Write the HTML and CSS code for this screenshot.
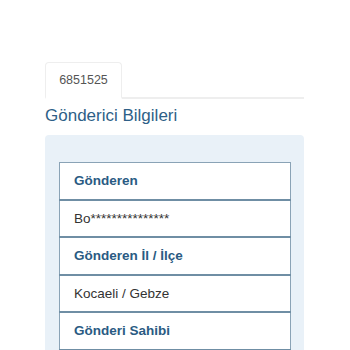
FILE: index.html
```html
<!DOCTYPE html>
<html>

<head>
	<link rel="stylesheet" href="styles.css">
</head>

<body>
	<div class="page">
		<div class="tabs">
			<div class="tab">6851525</div>
		</div>

		<h2 class="section-title">Gönderici Bilgileri</h2>

		<div class="panel">
			<table class="info-table">
				<tr><td class="label">Gönderen</td></tr>
				<tr><td>Bo***************</td></tr>
				<tr><td class="label">Gönderen İl / İlçe</td></tr>
				<tr><td>Kocaeli / Gebze</td></tr>
				<tr><td class="label">Gönderi Sahibi</td></tr>
				<tr><td>&nbsp;</td></tr>
			</table>
		</div>
	</div>
</body>

</html>
```

FILE: styles.css
```css
* {
	box-sizing: border-box;
	margin: 0;
	padding: 0;
	font-family: 'Liberation Sans', Arial, Helvetica, sans-serif;
}

body {
	background: white;
	height: 350px;
	overflow: hidden;
}

.page {
	padding: 62px 46px 0 45px;
}

.tabs {
	display: flex;
	border-bottom: 2px solid #eeeeee;
}

.tab {
	width: 77px;
	height: 37px;
	margin-bottom: -2px;
	border: 1px solid #eeeeee;
	border-bottom: 2px solid white;
	border-radius: 4px 4px 0 0;
	background: white;
	color: #555;
	font-size: 12.5px;
	display: flex;
	align-items: center;
	justify-content: center;
}

.section-title {
	margin: 6px 0 8px;
	font-size: 17px;
	line-height: 22px;
	font-weight: normal;
	color: #2e5f87;
}

.panel {
	background: #e9f1f8;
	border-radius: 4px;
	padding: 27px 13px 20px 14px;
}

.info-table {
	width: 100%;
	border-collapse: collapse;
	background: white;
	border: 1px solid #8aa3b6;
}

.info-table td {
	padding: 8px 14px;
	line-height: 19.5px;
	font-size: 13.5px;
	color: #333;
	border-top: 2px solid #6f8ea4;
}

.info-table tr:first-child td {
	border-top: 1px solid #8aa3b6;
}

.info-table td.label {
	font-weight: bold;
	color: #2a5b83;
}
```
